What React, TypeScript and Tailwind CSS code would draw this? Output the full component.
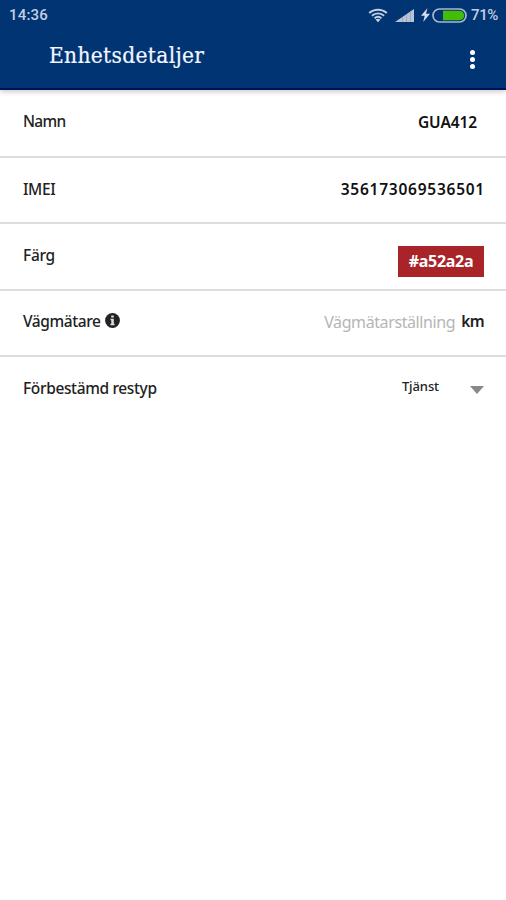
import type { ReactNode } from "react";
import clsx from "clsx";

const WifiIcon = () => (
  <svg width="20" height="15" viewBox="0 0 20 15" fill="none" stroke="#c3cee2">
    <path d="M1.200 5C6 .5 14 .5 18.800 5" strokeWidth="2" />
    <path d="M3.900 7.700c3.400-3.100 8.800-3.100 12.200 0" strokeWidth="1.900" />
    <path d="M6.500 10.200c2-1.700 5-1.700 7 0" strokeWidth="1.800" />
    <path d="M10 14.200l-2.500-2.600c1.400-1.200 3.600-1.200 5 0z" fill="#c3cee2" stroke="none" />
  </svg>
);

const SignalIcon = () => (
  <svg width="19" height="13" viewBox="0 0 19 13">
    <path d="M0 13L19 0v13z" fill="#b9c3d6" />
    <path d="M7.500 8v5M11.500 5v8M15.500 2v11" stroke="#8d9fc0" strokeWidth=".7" />
  </svg>
);

const BoltIcon = () => (
  <svg width="9" height="14" viewBox="0 0 9 14">
    <path d="M6.500 0L0 7.800h3.700L2.200 14 9 5.800H5z" fill="#d5dceb" />
  </svg>
);

const BatteryIcon = () => (
  <svg width="35" height="15" viewBox="0 0 35 15">
    <rect x="1" y="1" width="33" height="13" rx="6.500" fill="none" stroke="#a9b6d0" strokeWidth="1.700" />
    <path d="M11 2.800h16.500a4.700 4.700 0 0 1 0 9.400H11z" fill="#44bd08" />
  </svg>
);

const StatusBar = () => (
  <div className="flex h-[30px] items-center pr-2 pl-[9px] font-['Roboto'] text-[15px] text-[#c3cee2]">
    <span className="tracking-[0.2px]">14:36</span>
    <div className="ml-auto flex items-center">
      <WifiIcon />
      <span className="ml-[7px]">
        <SignalIcon />
      </span>
      <span className="ml-[7px]">
        <BoltIcon />
      </span>
      <span className="ml-[2px]">
        <BatteryIcon />
      </span>
      <span className="ml-1 tracking-[-0.4px]">71%</span>
    </div>
  </div>
);

const Header = () => (
  <header className="h-[90px] border-b-2 border-[#00115c] bg-[#003473] shadow-[0_2px_5px_rgba(0,0,0,0.2)]">
    <StatusBar />
    <div className="flex items-start justify-between pr-[31px] pl-[49px]">
      <h1 className="mt-[9px] font-['DejaVu_Serif_Condensed','DejaVu_Serif',serif] text-[22.500px] leading-8 tracking-[0.32px] text-[#f4f7ff] [-webkit-text-stroke:0.2px_#f4f7ff]">
        Enhetsdetaljer
      </h1>
      <button className="mt-5 flex flex-col gap-[2px]" aria-label="Meny">
        <span className="size-[5px] rounded-full bg-white" />
        <span className="size-[5px] rounded-full bg-white" />
        <span className="size-[5px] rounded-full bg-white" />
      </button>
    </div>
  </header>
);

const Row = ({
  label,
  className,
  children,
}: {
  label: ReactNode;
  className?: string;
  children: ReactNode;
}) => (
  <div
    className={clsx(
      "flex items-start justify-between border-b-2 border-[#dddddd] pr-[22px] pl-[23px]",
      className,
    )}
  >
    {label}
    {children}
  </div>
);

const App = () => {
  return (
    <div className="min-h-[900px] w-full overflow-hidden bg-white font-['Noto_Sans',sans-serif] text-[15.500px] leading-5 font-medium text-[#222222]">
      <Header />
      <main>
        <Row
          className="h-[68px] pt-[21px]"
          label={<span className="tracking-[-0.7px]">Namn</span>}
        >
          <span className="mt-px mr-[7px] font-semibold tracking-[-0.1px] text-[#111111]">GUA412</span>
        </Row>
        <Row
          className="h-[66px] pt-[21px]"
          label={<span className="tracking-[-0.4px]">IMEI</span>}
        >
          <span className="-mr-px font-semibold tracking-[0.75px] text-[#111111]">356173069536501</span>
        </Row>
        <Row
          className="h-[67px] pt-[21px]"
          label={<span className="tracking-[-0.3px]">Färg</span>}
        >
          <span className="mt-px flex h-[31px] w-[86px] items-center justify-center bg-[#a82428] pb-[2px] text-base font-bold tracking-[-0.3px] text-white">
            #a52a2a
          </span>
        </Row>
        <Row
          className="h-[66px] pt-5"
          label={
            <span className="flex items-center gap-1">
              <span className="tracking-[-0.4px]">Vägmätare</span>
              <svg className="-mt-px" width="15" height="15" viewBox="0 0 15 15">
                <circle cx="7.500" cy="7.500" r="7.400" fill="#222222" />
                <path d="M6.200 2.500h2.600v2H6.200zM5.500 5.700h3.300v5h.8v1.500H5.400v-1.500h.9V7.200h-.8z" fill="#dddddd" />
              </svg>
            </span>
          }
        >
          <span className="flex">
            <span className="mt-px mr-[6px] text-base leading-5 font-normal tracking-[-0.4px] text-[#b5b5b5]">
              Vägmätarställning
            </span>
            <span className="font-semibold tracking-[-0.6px]">km</span>
          </span>
        </Row>
        <Row
          className="h-[66px] border-transparent pt-[21px]"
          label={<span className="tracking-[-0.36px]">Förbestämd restyp</span>}
        >
          <span className="flex text-[13px]">
            <span className="-mt-[2px] tracking-[-0.1px]">Tjänst</span>
            <svg className="mt-2 ml-[31px]" width="14" height="8" viewBox="0 0 14 8">
              <path d="M0 0h14L7 8z" fill="#888888" />
            </svg>
          </span>
        </Row>
      </main>
    </div>
  );
};

export default App;
